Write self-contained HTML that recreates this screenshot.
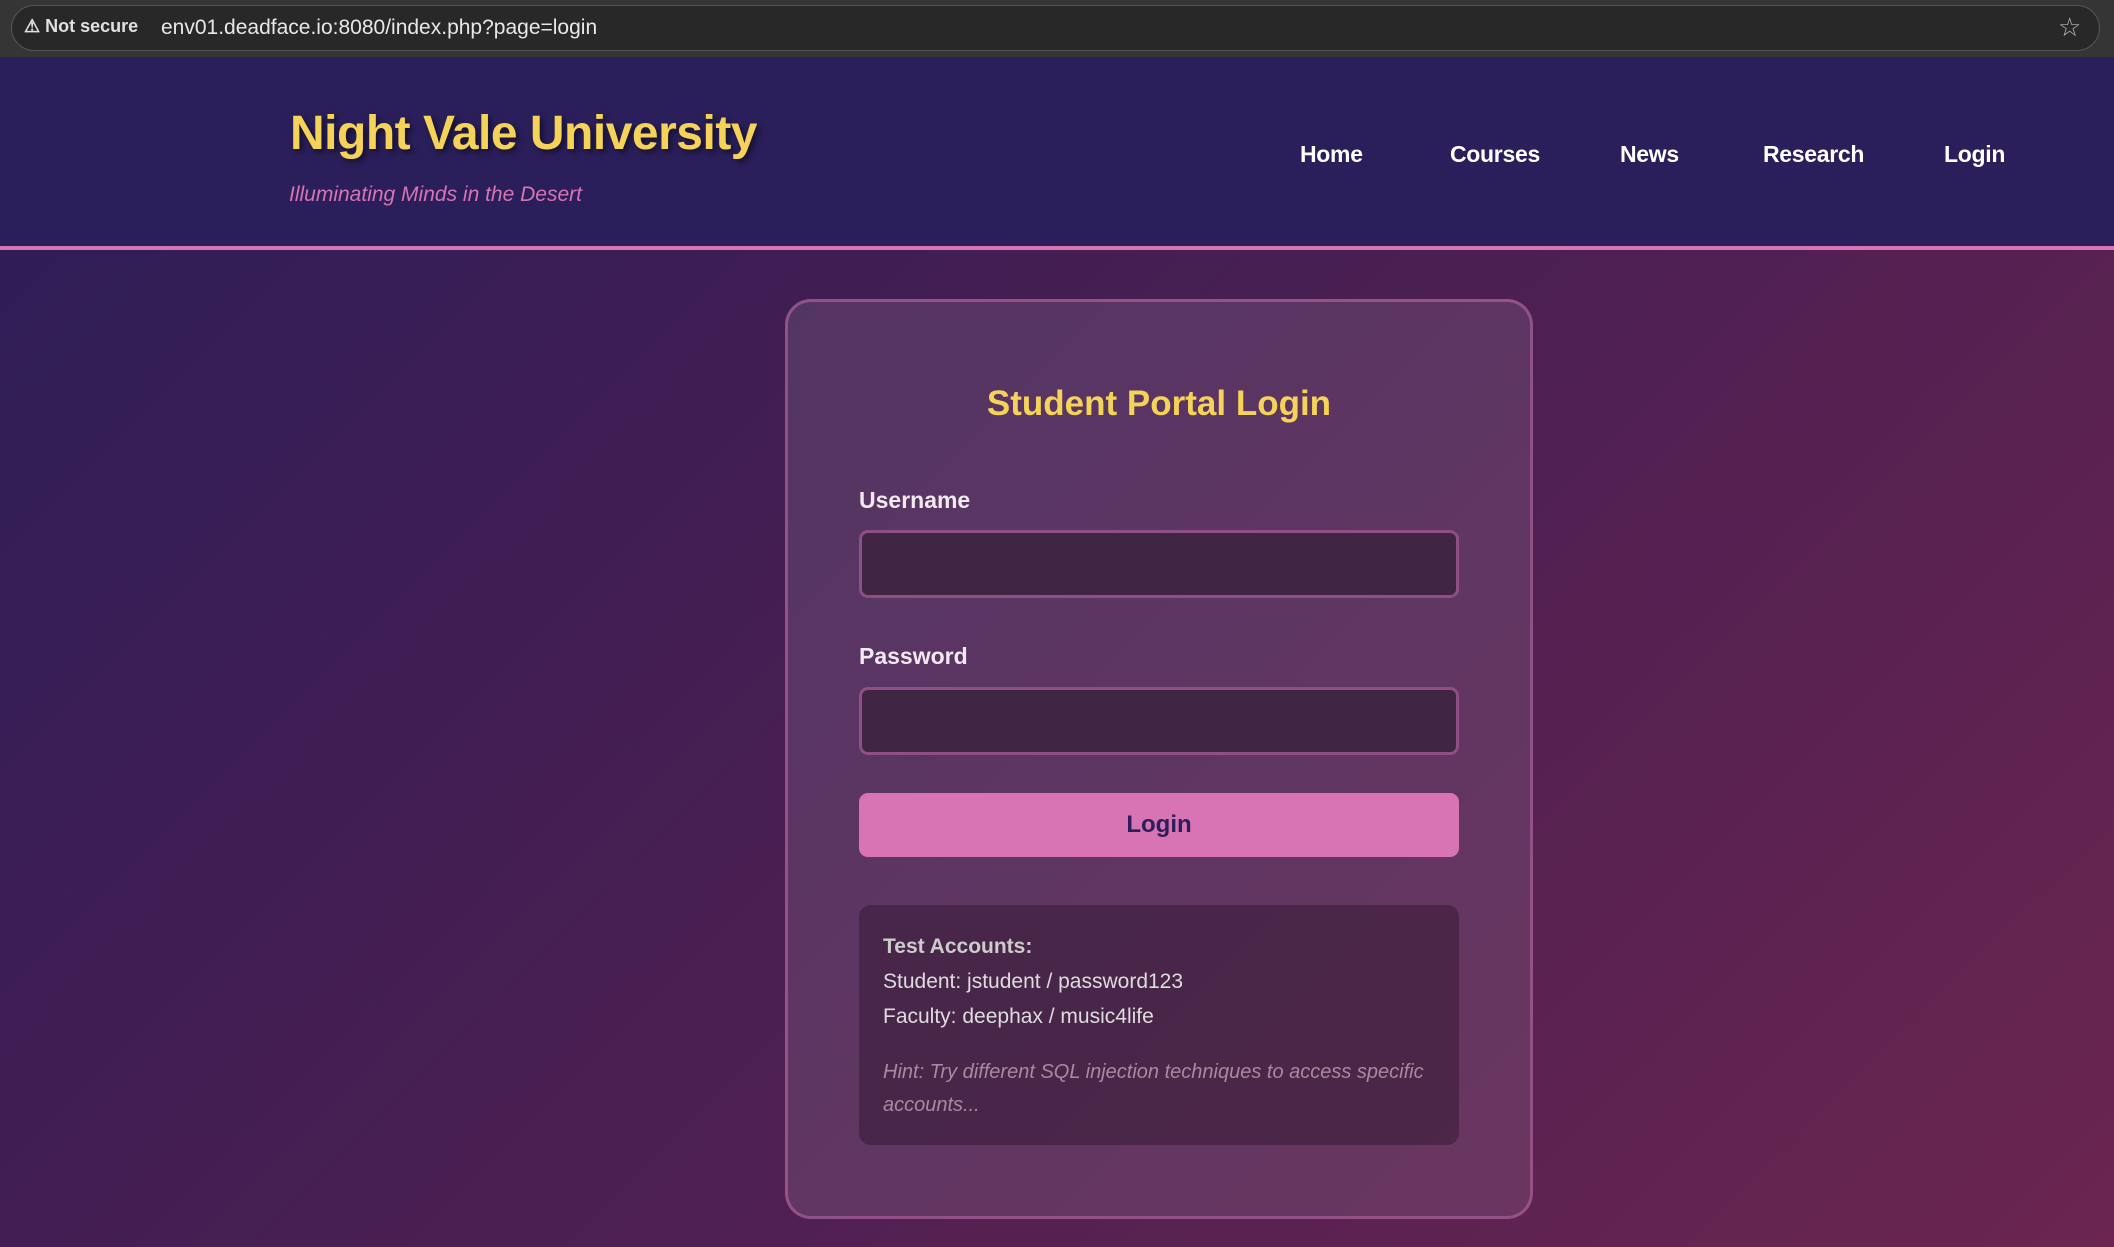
<!DOCTYPE html>
<html><head><meta charset="utf-8"><style>
*{margin:0;padding:0;box-sizing:border-box}
html,body{width:2114px;height:1247px;overflow:hidden}
body{font-family:"Liberation Sans",sans-serif;background:linear-gradient(135deg,#2b1d58 0%,#4a1f52 50%,#6b2550 100%);position:relative}
.bar{position:absolute;left:0;top:0;width:2114px;height:57px;background:#353535}
.pill{position:absolute;left:11px;top:5px;width:2089px;height:46px;border-radius:23px;background:#282828;border:1px solid #555}
.ns{position:absolute;left:24px;top:16px;color:#e0e0e0;font-size:18px;font-weight:bold}
.url{position:absolute;left:161px;top:16px;color:#e8e8e8;font-size:21px}
.star{position:absolute;left:2058px;top:12px;color:#bbb;font-size:26px}
header{position:absolute;left:0;top:57px;width:2114px;height:193px;background:#2a1f5a;border-bottom:4px solid #d874b4}
h1{position:absolute;left:290px;top:49px;color:#f5d358;font-size:48px;font-weight:bold;letter-spacing:-0.5px;text-shadow:3px 3px 6px rgba(0,0,0,.5)}
.sub{position:absolute;left:289px;top:126px;color:#d874b4;font-size:21px;font-style:italic}
nav a{position:absolute;top:84px;color:#fff;font-size:23px;font-weight:bold;text-decoration:none;letter-spacing:-0.3px}
.card{position:absolute;left:785px;top:299px;width:748px;height:920px;border-radius:26px;border:3px solid rgba(216,116,180,.45);background:linear-gradient(135deg,#533564,#6a3660)}
.card h2{position:absolute;left:0;width:100%;top:82px;text-align:center;color:#f5d358;font-size:35px}
.lbl{position:absolute;left:71px;color:#f2e8f0;font-size:23px;font-weight:bold}
.inp{position:absolute;left:71px;width:600px;height:68px;border-radius:9px;border:3px solid #8e4f84;background:#402544}
.btn{position:absolute;left:71px;top:491px;width:600px;height:64px;border-radius:9px;background:#d974b4;color:#2a1f5a;font-size:24px;font-weight:bold;text-align:center;line-height:64px}
.info{position:absolute;left:71px;top:603px;width:600px;height:240px;border-radius:12px;background:rgba(45,20,45,.45);padding:24px 24px;color:#ddd;font-size:21px;line-height:35px}
.hint{color:#a88aa0;font-style:italic;font-size:20px;line-height:33px;margin-top:22px}
</style></head><body>
<div class="bar"><div class="pill"></div><div class="ns">⚠ Not secure</div><div class="url">env01.deadface.io:8080/index.php?page=login</div><div class="star">☆</div></div>
<header><h1>Night Vale University</h1><div class="sub">Illuminating Minds in the Desert</div>
<nav><a style="left:1300px">Home</a><a style="left:1450px">Courses</a><a style="left:1620px">News</a><a style="left:1763px">Research</a><a style="left:1944px">Login</a></nav></header>
<div class="card"><h2>Student Portal Login</h2>
<div class="lbl" style="top:185px">Username</div><div class="inp" style="top:228px"></div>
<div class="lbl" style="top:341px">Password</div><div class="inp" style="top:385px"></div>
<div class="btn">Login</div>
<div class="info"><b style="color:#ccc">Test Accounts:</b><br>Student: jstudent / password123<br>Faculty: deephax / music4life<div class="hint">Hint: Try different SQL injection techniques to access specific accounts...</div></div>
</div>
</body></html>
